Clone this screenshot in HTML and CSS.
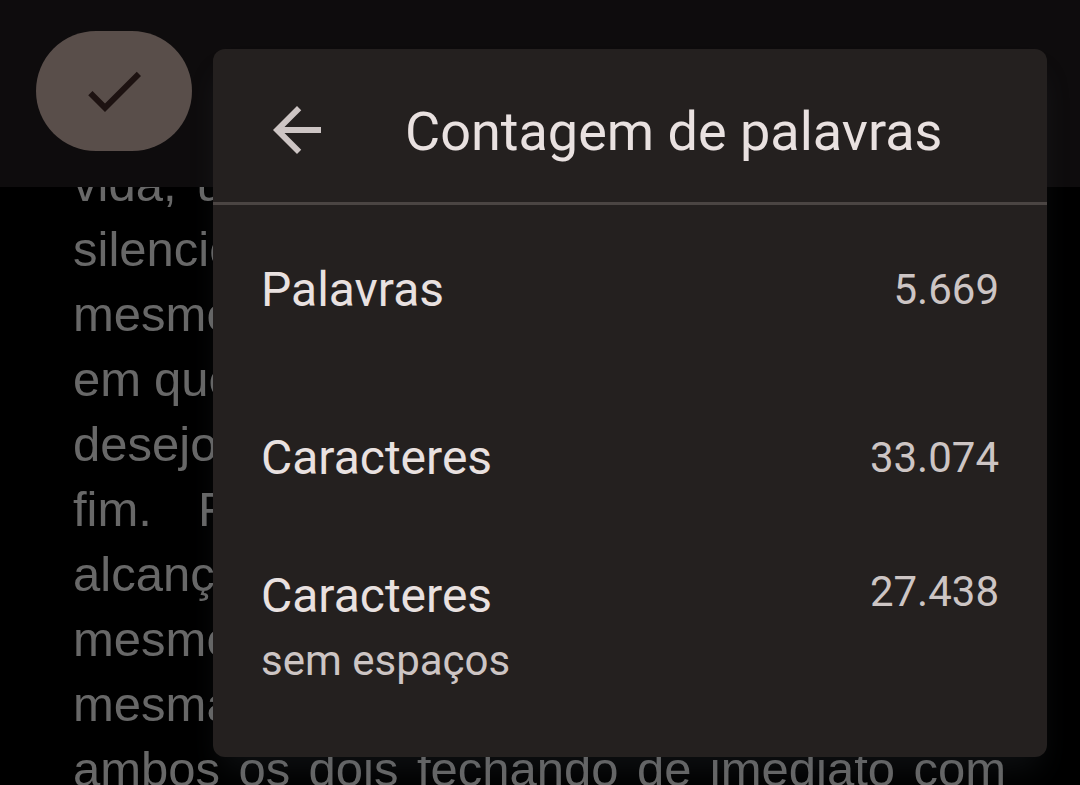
FILE: index.html
```
<!DOCTYPE html>
<html lang="pt-BR">
<head>
<meta charset="utf-8">
<meta name="viewport" content="width=device-width, initial-scale=1">
<title>Contagem de palavras</title>
<link rel="stylesheet" href="styles.css">
</head>
<body>
<div class="app">
  <header class="toolbar">
    <button class="done" type="button" aria-label="Concluir">
      <svg class="icon" viewBox="0 0 24 24" aria-hidden="true"><path d="M9 16.17 4.83 12l-1.42 1.41L9 19 21 7l-1.41-1.41z"/></svg>
    </button>
  </header>
  <main class="document">
    <p class="line"><span>vida,</span><span>u</span></p>
    <p class="line">silencio</p>
    <p class="line">mesmo</p>
    <p class="line tight"><span>em</span><span>que</span></p>
    <p class="line">desejo</p>
    <p class="line wide"><span>fim.</span><span>F</span></p>
    <p class="line">alcanç</p>
    <p class="line">mesmo</p>
    <p class="line">mesma</p>
    <p class="line full">ambos os dois fechando de imediato com</p>
  </main>
  <section class="panel" aria-labelledby="panel-title">
    <div class="panel-head">
      <button class="back" type="button" aria-label="Voltar">
        <svg class="icon" viewBox="0 0 24 24" aria-hidden="true"><path d="M20 11H7.83l5.59-5.59L12 4l-8 8 8 8 1.41-1.41L7.83 13H20z"/></svg>
      </button>
      <h1 class="title" id="panel-title">Contagem de palavras</h1>
    </div>
    <dl class="stats">
      <div class="row"><dt class="label">Palavras</dt><dd class="value">5.669</dd></div>
      <div class="row"><dt class="label">Caracteres</dt><dd class="value">33.074</dd></div>
      <div class="row detailed"><dt class="label">Caracteres<small class="note">sem espaços</small></dt><dd class="value">27.438</dd></div>
    </dl>
  </section>
</div>
</body>
</html>
```
FILE: styles.css
```
* {
  box-sizing: border-box;
}

body {
  margin: 0;
  background: #000;
  font-family: Roboto, sans-serif;
}

button {
  border: 0;
  padding: 0;
  background: none;
}

.app {
  position: relative;
  height: 100vh;
  overflow: hidden;
}

.icon {
  display: block;
  width: 72px;
  height: 72px;
  fill: currentColor;
}

.toolbar {
  position: relative;
  z-index: 1;
  padding: 31px 36px 36px;
  background: #0e0c0d;
}

.done {
  display: flex;
  align-items: center;
  justify-content: center;
  width: 156px;
  height: 120px;
  border-radius: 60px;
  background: #594e4a;
  color: #1d1211;
}

.document {
  margin-top: -35px;
  padding: 0 74px 0 73px;
  font: 49px/65px "Liberation Sans", Arial, sans-serif;
  color: #686868;
}

.line {
  display: flex;
  gap: 20px;
  margin: 0;
}

.tight {
  gap: 13px;
}

.wide {
  gap: 46px;
}

.full {
  display: block;
  text-align-last: justify;
  white-space: nowrap;
}

.panel {
  position: absolute;
  z-index: 2;
  top: 49px;
  left: 213px;
  right: 33px;
  padding-bottom: 47px;
  border-radius: 12px;
  background: #24201f;
  box-shadow: 0 20px 32px -8px rgba(70, 80, 88, 0.2);
}

.panel-head {
  display: flex;
  align-items: center;
  gap: 72px;
  height: 156px;
  padding: 8px 48px 0;
  border-bottom: 3px solid #4b4543;
}

.back {
  color: #cdc5c4;
}

.title {
  margin: 0;
  padding-top: 4px;
  font-size: 54px;
  font-weight: 400;
  line-height: 64px;
  color: #e9e1e0;
}

.stats {
  margin: 0;
  padding-top: 1px;
}

.row {
  display: flex;
  align-items: center;
  justify-content: space-between;
  height: 168px;
  padding: 0 48px;
}

.detailed {
  align-items: flex-start;
  padding-top: 24px;
}

.label {
  font-size: 48px;
  line-height: 60px;
  color: #e9e1e0;
}

.note {
  display: block;
  font-size: 42px;
  line-height: 70px;
  color: #cdc5c4;
}

.value {
  margin: 0;
  font-size: 42px;
  line-height: 52px;
  color: #cdc5c4;
}
```
